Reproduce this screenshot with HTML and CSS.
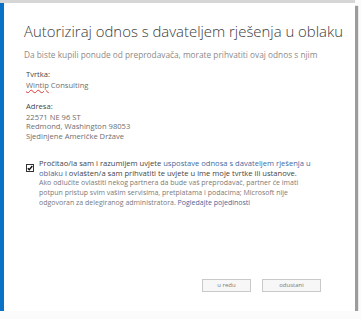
FILE: index.html
```html
<!DOCTYPE html>
<html lang="hr">
<head>
    <meta charset="UTF-8">
    <meta name="viewport" content="width=device-width, initial-scale=1.0">
    <title>Autoriziraj odnos</title>
    <link rel="stylesheet" href="styles.css">
</head>
<body>
    <div class="shell">
        <div class="dialog">
            <div class="header">
                <h1>Autoriziraj odnos s davateljem rješenja u oblaku</h1>
                <p class="subtitle">Da biste kupili ponude od preprodavača, morate prihvatiti ovaj odnos s njim</p>
            </div>

            <!-- Company details -->
            <div class="details">
                <div class="field">
                    <div class="label">Tvrtka:</div>
                    <div class="value"><span class="misspelled">Wintip</span> Consulting</div>
                </div>
                <div class="field">
                    <div class="label">Adresa:</div>
                    <div class="value">22571 NE 96 ST</div>
                    <div class="value">Redmond, Washington 98053</div>
                    <div class="value">Sjedinjene Američke Države</div>
                </div>
            </div>

            <div class="consent">
                <span class="check">
                    <svg width="8" height="8" viewBox="0 0 8 8">
                        <rect x="0.5" y="0.5" width="7" height="7" fill="#fff" stroke="#333"/>
                        <path d="M1.8 4.2 L3.3 5.7 L6.3 2" fill="none" stroke="#111" stroke-width="1.4"/>
                    </svg>
                </span>
                <div class="consent-text">
                    <p class="agree">Pročitao/la sam i razumijem uvjete <a href="#">uspostave odnosa s davateljem rješenja u<br>oblaku</a> i ovlašten/a sam prihvatiti te uvjete u ime moje tvrtke ili ustanove.</p>
                    <p class="note">Ako odlučite ovlastiti nekog partnera da bude vaš preprodavač, partner će imati<br>potpun pristup svim vašim servisima, pretplatama i podacima; Microsoft nije<br>odgovoran za delegiranog administratora. <a href="#">Pogledajte pojedinosti</a></p>
                </div>
            </div>

            <div class="footer">
                <button class="btn btn-ok">u redu</button>
                <button class="btn btn-cancel">odustani</button>
            </div>
        </div>
    </div>
</body>
</html>
```

FILE: styles.css
```css
body {
    margin: 0;
    padding: 0;
    background-color: #fbfbfb;
    font-family: "Open Sans", "Noto Sans", sans-serif;
}
.shell {
    width: 355px;
    border-top: 3px solid #d6d6d6;
}
.dialog {
    display: flex;
    flex-direction: column;
    height: 308px;
    box-sizing: border-box;
    background: #fff;
    border-left: 4px solid #0a72c6;
    box-shadow: 3px 3px 1px #9c9c9c;
    padding: 18px 34px 19px 20px;
}
.header h1 {
    margin: 0;
    font-size: 14.9px;
    font-weight: 300;
    line-height: 20px;
    color: #3a3a3a;
    white-space: nowrap;
}
.subtitle {
    margin: 8px 0 0;
    font-size: 8.3px;
    line-height: 11px;
    color: #8a8a8a;
    white-space: nowrap;
}
.details {
    margin-top: 10px;
    padding-left: 2px;
    font-size: 7.6px;
    line-height: 9.5px;
}
.field + .field {
    margin-top: 12px;
}
.label {
    color: #444;
    margin-bottom: 1px;
}
.value {
    color: #6e6e6e;
}
.misspelled {
    text-decoration: underline wavy #d33;
    text-decoration-thickness: 0.6px;
}
.consent {
    display: flex;
    gap: 5px;
    margin-top: 17px;
    padding-left: 2px;
    font-size: 7px;
    line-height: 10px;
    white-space: nowrap;
}
.check {
    display: flex;
    padding-top: 6px;
}
.consent-text p {
    margin: 0;
}
.agree {
    font-size: 7.6px;
    color: #444;
}
.note {
    margin-top: 1px;
    color: #7a7a7a;
}
.consent-text a {
    color: #3f6a9e;
    text-decoration: none;
}
.footer {
    margin-top: auto;
    display: flex;
    justify-content: flex-end;
    gap: 11px;
}
.btn {
    height: 13px;
    padding: 0;
    border: 1px solid #c9c9c9;
    background-color: #f7f7f7;
    color: #777;
    font-family: inherit;
    font-size: 6px;
    line-height: 11px;
}
.btn-ok {
    width: 49px;
}
.btn-cancel {
    width: 59px;
}
```
